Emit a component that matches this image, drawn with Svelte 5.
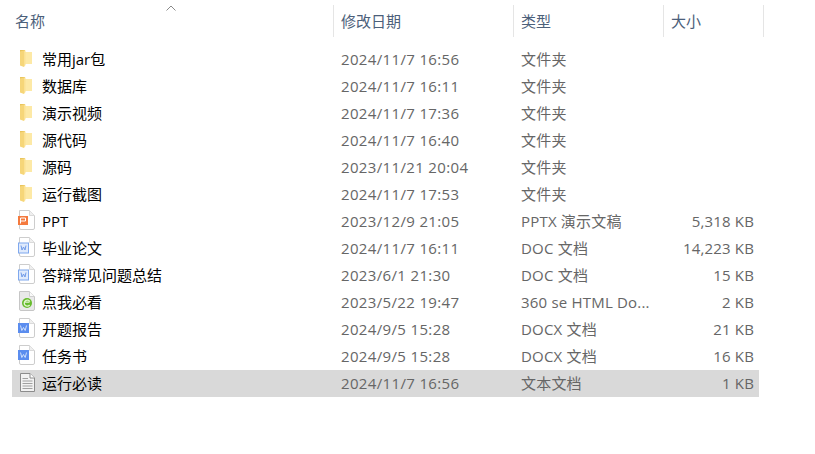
<script>
  const rows = [
    { icon: "folder", name: "常用jar包", date: "2024/11/7 16:56", type: "文件夹", size: "" },
    { icon: "folder", name: "数据库", date: "2024/11/7 16:11", type: "文件夹", size: "" },
    { icon: "folder", name: "演示视频", date: "2024/11/7 17:36", type: "文件夹", size: "" },
    { icon: "folder", name: "源代码", date: "2024/11/7 16:40", type: "文件夹", size: "" },
    { icon: "folder", name: "源码", date: "2023/11/21 20:04", type: "文件夹", size: "" },
    { icon: "folder", name: "运行截图", date: "2024/11/7 17:53", type: "文件夹", size: "" },
    { icon: "ppt", name: "PPT", date: "2023/12/9 21:05", type: "PPTX 演示文稿", size: "5,318 KB" },
    { icon: "doc", name: "毕业论文", date: "2024/11/7 16:11", type: "DOC 文档", size: "14,223 KB" },
    { icon: "doc", name: "答辩常见问题总结", date: "2023/6/1 21:30", type: "DOC 文档", size: "15 KB" },
    { icon: "html", name: "点我必看", date: "2023/5/22 19:47", type: "360 se HTML Do...", size: "2 KB" },
    { icon: "docx", name: "开题报告", date: "2024/9/5 15:28", type: "DOCX 文档", size: "21 KB" },
    { icon: "docx", name: "任务书", date: "2024/9/5 15:28", type: "DOCX 文档", size: "16 KB" },
    { icon: "txt", name: "运行必读", date: "2024/11/7 16:56", type: "文本文档", size: "1 KB", selected: true }
  ];
</script>

{#snippet page()}
  <path d="M2.5 2.5H12.5L17.5 7.5V20Q17.5 21.5 16 21.5H4Q2.5 21.5 2.5 20Z" fill="#fff" stroke="#cdcdcd" />
  <path d="M12.5 2.5V7.5H17.5" fill="#efefef" stroke="#dadada" />
{/snippet}

{#snippet icon(kind)}
  <svg class="icon" viewBox="0 0 18 27" width="18" height="27">
    {#if kind === "folder"}
      <path d="M3 4H8V19L3 18Z" fill="#e8c45c" />
      <path d="M8 6H15V18H8Z" fill="#fde9a6" />
      <path d="M3 5.5L7 4.5V21L3 19.5Z" fill="#f6d679" />
      <path d="M7 4.5H8.5V19L7 21Z" fill="#fbe193" />
    {:else if kind === "ppt"}
      {@render page()}
      <rect x="1" y="8" width="10" height="9" fill="#f47a3e" />
      <path d="M3.5 15.5V10H8.5V13H3.5" fill="none" stroke="#fff" />
    {:else if kind === "doc"}
      {@render page()}
      <rect x="1.5" y="8" width="10" height="10" fill="#dfeafc" stroke="#7fa8ee" />
      <path d="M4 10.5L5 15L6.5 12L8 15L9 10.5" fill="none" stroke="#6f9ae8" />
    {:else if kind === "docx"}
      {@render page()}
      <rect x="1" y="7" width="11" height="10" fill="#5b8def" />
      <path d="M3.5 9.5L4.8 14.5L6.5 11.5L8.2 14.5L9.5 9.5" fill="none" stroke="#cfe0fb" />
    {:else if kind === "html"}
      <path d="M2.5 2.5H12.5L17.5 7.5V20Q17.5 21.5 16 21.5H4Q2.5 21.5 2.5 20Z" fill="#e9e9e9" stroke="#c6c6c6" />
      <path d="M12.5 2.5V7.5H17.5" fill="#fafafa" stroke="#cfcfcf" />
      <circle cx="10" cy="14" r="5" fill="#66bb2c" />
      <path d="M7.5 13.2H12.5M12.6 16A3 3 0 1 1 12.8 12.6" fill="none" stroke="#e4f5d2" stroke-width="1.3" />
    {:else}
      <path d="M3.5 3.5H13L17.5 8V21.5H3.5Z" fill="#f2f2f2" stroke="#8c8c8c" />
      <path d="M13 3.5V8H17.5" fill="#fff" stroke="#8c8c8c" />
      <path d="M5.5 8.5H11M5.5 11H15.5M5.5 13.5H15.5M5.5 16H15.5M5.5 18.5H15.5" stroke="#a0a0a0" />
    {/if}
  </svg>
{/snippet}

<div class="explorer">
  <svg class="sort" viewBox="0 0 10 6" width="10" height="6">
    <path d="M.5 5.5L5 1L9.5 5.5" fill="none" stroke="#8a8a8a" />
  </svg>
  <div class="header">
    <div class="col first">名称</div>
    <div class="col">修改日期</div>
    <div class="col">类型</div>
    <div class="col">大小</div>
  </div>
  <div class="list">
    {#each rows as r}
      <div class="row" class:selected={r.selected}>
        <div class="name">
          {@render icon(r.icon)}
          <span>{r.name}</span>
        </div>
        <div class="meta date">{r.date}</div>
        <div class="meta type">{r.type}</div>
        <div class="meta size">{r.size}</div>
      </div>
    {/each}
  </div>
</div>

<style>
  :global(body) {
    background: #fff;
  }
  .explorer {
    position: relative;
    width: 815px;
    height: 454px;
    overflow: hidden;
    padding-top: 5px;
    box-sizing: border-box;
    font-family: "Open Sans", "Noto Sans CJK SC", sans-serif;
    font-size: 15px;
  }
  .sort {
    position: absolute;
    left: 166px;
    top: 5px;
  }
  .header {
    display: grid;
    grid-template-columns: 334px 180px 150px 100px;
    height: 32px;
    line-height: 32px;
    color: #4c607a;
  }
  .col {
    border-right: 1px solid #e5e5e5;
    padding-left: 7px;
  }
  .col.first {
    padding-left: 15px;
  }
  .list {
    margin: 9px 0 0 12px;
    width: 747px;
  }
  .row {
    display: grid;
    grid-template-columns: 321px 180px 150px 96px;
    height: 27px;
    line-height: 27px;
  }
  .selected {
    background: #d9d9d9;
  }
  .name {
    display: flex;
    gap: 7px;
    padding-left: 5px;
    color: #000;
  }
  .icon {
    flex: none;
  }
  .meta {
    color: #666;
    padding-left: 8px;
    white-space: nowrap;
  }
  .date {
    letter-spacing: .35px;
  }
  .type {
    letter-spacing: .2px;
  }
  .size {
    padding: 0 5px 0 0;
    text-align: right;
    letter-spacing: .15px;
  }
</style>
